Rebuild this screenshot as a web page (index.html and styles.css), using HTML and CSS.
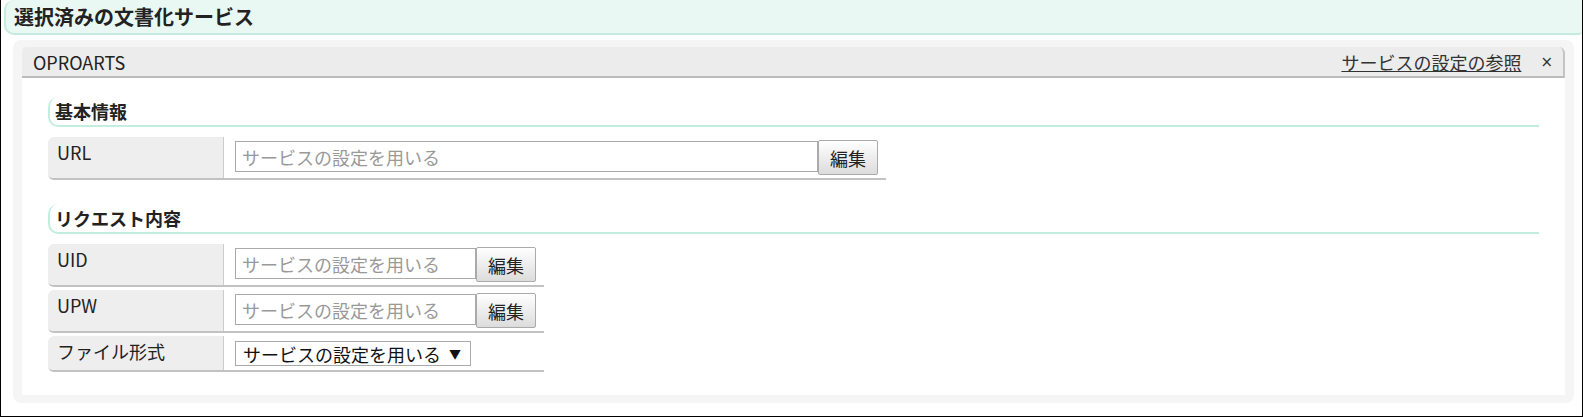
FILE: index.html
```html
<!DOCTYPE html>
<html lang="ja">
  <head>
    <meta charset="UTF-8" />
    <title>選択済みの文書化サービス</title>
    <link rel="stylesheet" href="styles.css">
  </head>
  <body>
    <div class="frame">
      <h2 class="page-title">選択済みの文書化サービス</h2>

      <div class="panel">
        <div class="card">
          <div class="card-head">
            <span class="card-name">OPROARTS</span>
            <a class="card-link" href="#">サービスの設定の参照</a>
            <span class="card-close">×</span>
          </div>

          <div class="card-body">
            <h3 class="section">基本情報</h3>
            <div class="fields">
              <div class="field">
                <div class="field-label">URL</div>
                <div class="field-value">
                  <input type="text" class="text wide" placeholder="サービスの設定を用いる" />
                  <button class="edit">編集</button>
                </div>
              </div>
            </div>

            <h3 class="section">リクエスト内容</h3>
            <div class="fields">
              <div class="field">
                <div class="field-label">UID</div>
                <div class="field-value">
                  <input type="text" class="text narrow" placeholder="サービスの設定を用いる" />
                  <button class="edit">編集</button>
                </div>
              </div>
              <div class="field">
                <div class="field-label">UPW</div>
                <div class="field-value">
                  <input type="text" class="text narrow" placeholder="サービスの設定を用いる" />
                  <button class="edit">編集</button>
                </div>
              </div>
              <div class="field">
                <div class="field-label">ファイル形式</div>
                <div class="field-value select-cell">
                  <div class="select">サービスの設定を用いる<span class="arrow">▼</span></div>
                </div>
              </div>
            </div>
          </div>
        </div>
      </div>
    </div>
  </body>
</html>
```

FILE: styles.css
```css
body {
  margin: 0;
  font-family: "Noto Sans CJK JP", sans-serif;
  color: #222;
  background: #fff;
}
.frame {
  width: 1583px;
  height: 417px;
  box-sizing: border-box;
  border: 1px solid #000;
  border-top: 0;
}
.page-title {
  margin: 0 0 0 3px;
  height: 35px;
  box-sizing: border-box;
  padding-left: 8px;
  background: #e9f8f2;
  border-left: 2px solid #c3ecdd;
  border-bottom: 2px solid #c3ecdd;
  border-radius: 10px 0 4px 10px;
  font-size: 20px;
  line-height: 33px;
  font-weight: bold;
}
.panel {
  margin: 5px 8px 0 12px;
  padding: 7px 9px 8px;
  background: #f5f5f5;
  border-radius: 8px;
}
.card {
  background: #fff;
  border-radius: 4px 6px 0 0;
}
.card-head {
  display: flex;
  align-items: center;
  height: 31px;
  box-sizing: border-box;
  padding: 0 10px 0 11px;
  background: #ececec;
  border-right: 2px solid #c4c4c4;
  border-bottom: 2px solid #bbb;
  border-radius: 4px 6px 0 0;
  font-size: 18px;
}
.card-name {
  flex: 1;
}
.card-link {
  color: #333;
  text-decoration: underline;
  margin-right: 19px;
}
.card-close {
  font-family: "DejaVu Sans", sans-serif;
  font-size: 15px;
  color: #333;
}
.card-body {
  padding: 19px 26px 23px 26px;
}
.section {
  margin: 0 0 10px;
  height: 30px;
  box-sizing: border-box;
  padding-left: 5px;
  border-left: 2px solid #c3eedf;
  border-bottom: 2px solid #c3eedf;
  border-radius: 10px 0 0 10px;
  font-size: 18px;
  line-height: 28px;
  font-weight: bold;
}
.fields {
  display: grid;
  justify-content: start;
  row-gap: 3px;
  margin-bottom: 24px;
}
.fields:last-child {
  margin-bottom: 0;
}
.field {
  display: flex;
  border-bottom: 2px solid #c2c2c2;
  border-radius: 6px 0 0 6px;
  overflow: hidden;
}
.field-label {
  width: 176px;
  box-sizing: border-box;
  padding: 3px 9px;
  background: #eee;
  border-right: 1px solid #ccc;
  font-size: 18px;
  line-height: 24px;
}
.field-value {
  display: flex;
  align-items: flex-start;
  padding: 3px 8px 3px 11px;
}
.select-cell {
  padding: 5px 8px 4px 11px;
}
.text {
  height: 31px;
  box-sizing: border-box;
  margin: 1px 0 0;
  padding: 0 6px;
  border: 1px solid #aaa;
  border-radius: 0;
  font-family: inherit;
  font-size: 18px;
  color: #222;
}
.text::placeholder {
  color: #999;
}
.wide {
  width: 583px;
}
.narrow {
  width: 241px;
}
.edit {
  width: 60px;
  height: 35px;
  padding: 0;
  border: 1px solid #aaa;
  border-radius: 2px;
  background: linear-gradient(#fff, #dcdcdc);
  font-family: inherit;
  font-size: 18px;
  color: #222;
}
.select {
  display: inline-flex;
  align-items: center;
  height: 25px;
  box-sizing: border-box;
  padding: 0 9px 0 7px;
  border: 1px solid #aaa;
  font-size: 18px;
  color: #111;
}
.arrow {
  margin-left: 8px;
  font-size: 12px;
}
```
